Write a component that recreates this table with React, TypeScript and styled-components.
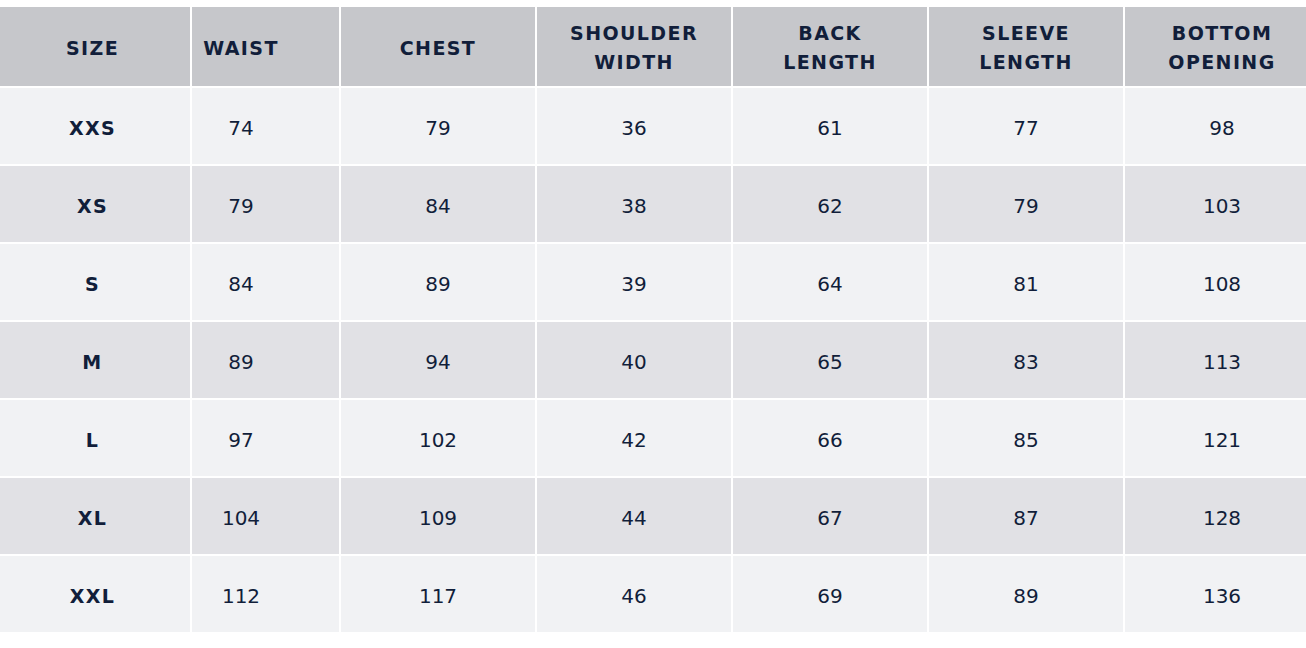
import React from "react";
import styled, { createGlobalStyle } from "styled-components";

const GlobalStyle = createGlobalStyle`
  html, body { margin: 0; padding: 0; background: #ffffff; }
  body { font-family: "DejaVu Sans", "Liberation Sans", sans-serif; color: #111e3a; }
`;

const columns = [
  { key: "size", label: ["SIZE"], width: 190, padL: 0, padR: 5 },
  { key: "waist", label: ["WAIST"], width: 147, padL: 0, padR: 49 },
  { key: "chest", label: ["CHEST"], width: 194, padL: 0, padR: 0 },
  { key: "shoulder", label: ["SHOULDER", "WIDTH"], width: 194, padL: 0, padR: 0 },
  { key: "back", label: ["BACK", "LENGTH"], width: 194, padL: 0, padR: 0 },
  { key: "sleeve", label: ["SLEEVE", "LENGTH"], width: 194, padL: 0, padR: 0 },
  { key: "bottom", label: ["BOTTOM", "OPENING"], width: 194, padL: 0, padR: 0 },
];

const rows: (string | number)[][] = [
  ["XXS", 74, 79, 36, 61, 77, 98],
  ["XS", 79, 84, 38, 62, 79, 103],
  ["S", 84, 89, 39, 64, 81, 108],
  ["M", 89, 94, 40, 65, 83, 113],
  ["L", 97, 102, 42, 66, 85, 121],
  ["XL", 104, 109, 44, 67, 87, 128],
  ["XXL", 112, 117, 46, 69, 89, 136],
];

const template = columns.map((c) => `${c.width}px`).join(" ");

const Viewport = styled.div`
  width: 1306px;
  overflow: hidden;
  padding-top: 7px;
`;

const Table = styled.div`
  display: flex;
  flex-direction: column;
  gap: 2px;
  width: max-content;
`;

const Row = styled.div<{ $height: number }>`
  display: grid;
  grid-template-columns: ${template};
  column-gap: 2px;
  height: ${(p) => p.$height}px;
`;

const Cell = styled.div<{ $bg: string; $padL: number; $padR: number; $bold?: boolean }>`
  display: flex;
  align-items: center;
  justify-content: center;
  text-align: center;
  background: ${(p) => p.$bg};
  padding-left: ${(p) => p.$padL}px;
  padding-right: ${(p) => p.$padR}px;
  padding-top: 3px;
  box-sizing: border-box;
  font-size: ${(p) => (p.$bold ? "19px" : "20px")};
  font-weight: ${(p) => (p.$bold ? 700 : 400)};
  letter-spacing: ${(p) => (p.$bold ? "1.4px" : "0px")};
  color: #111e3a;
`;

const HeaderCell = styled(Cell)`
  font-size: 19px;
  font-weight: 700;
  letter-spacing: 1.4px;
  line-height: 29px;
  flex-direction: column;
`;

const HEADER_BG = "#c6c7cb";
const ODD_BG = "#f1f2f4";
const EVEN_BG = "#e1e1e5";

export default function App() {
  return (
    <>
      <GlobalStyle />
      <Viewport>
        <Table>
          <Row $height={79}>
            {columns.map((c) => (
              <HeaderCell key={c.key} $bg={HEADER_BG} $padL={c.padL} $padR={c.padR}>
                {c.label.map((l) => (
                  <span key={l}>{l}</span>
                ))}
              </HeaderCell>
            ))}
          </Row>
          {rows.map((r, i) => (
            <Row key={String(r[0])} $height={76}>
              {r.map((v, j) => (
                <Cell
                  key={columns[j].key}
                  $bg={i % 2 === 0 ? ODD_BG : EVEN_BG}
                  $padL={columns[j].padL}
                  $padR={columns[j].padR}
                  $bold={j === 0}
                >
                  {v}
                </Cell>
              ))}
            </Row>
          ))}
        </Table>
      </Viewport>
    </>
  );
}
